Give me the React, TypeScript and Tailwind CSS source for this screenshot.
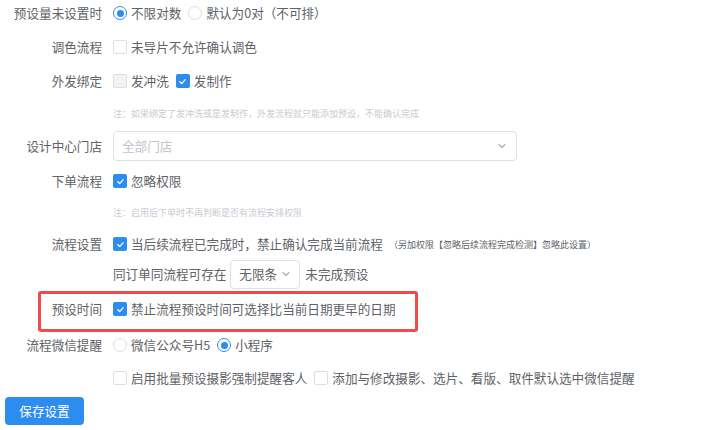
import { ReactNode } from "react";

const font = { fontFamily: '"Noto Sans CJK SC", "Noto Sans", sans-serif' };

function Checkbox({ checked = false, disabled = false }: { checked?: boolean; disabled?: boolean }) {
  if (checked) {
    return (
      <span className="flex h-[14px] w-[14px] shrink-0 items-center justify-center rounded-[2px] bg-[#2d8cf0]">
        <svg width="9" height="9" viewBox="0 0 10 10" fill="none">
          <path d="M2 5.2 4.2 7.3 8 3" stroke="white" strokeWidth="1.4" strokeLinecap="round" strokeLinejoin="round" />
        </svg>
      </span>
    );
  }
  return (
    <span
      className={
        disabled
          ? "h-[14px] w-[14px] shrink-0 rounded-[2px] border border-[#dcdee2] bg-[#f3f3f3]"
          : "h-[14px] w-[14px] shrink-0 rounded-[2px] border border-[#dcdee2] bg-white"
      }
    />
  );
}

function Radio({ checked = false }: { checked?: boolean }) {
  return checked ? (
    <span className="flex h-[14px] w-[14px] shrink-0 items-center justify-center rounded-full border-[1.5px] border-[#2d8cf0] bg-white">
      <span className="h-[7px] w-[7px] rounded-full bg-[#2d8cf0]" />
    </span>
  ) : (
    <span className="h-[14px] w-[14px] shrink-0 rounded-full border border-[#dcdee2] bg-white" />
  );
}

function Option({ control, children, last = false }: { control: ReactNode; children: ReactNode; last?: boolean }) {
  return (
    <span className={last ? "flex items-center" : "mr-[7px] flex items-center"}>
      {control}
      <span className="ml-[4px] whitespace-nowrap">{children}</span>
    </span>
  );
}

function Row({ label, className, children }: { label?: string; className: string; children?: ReactNode }) {
  return (
    <div className={"flex items-center " + className}>
      <div className="w-[102px] shrink-0 whitespace-nowrap text-right">{label}</div>
      <div className="ml-[11px] flex items-center">{children}</div>
    </div>
  );
}

function Chevron() {
  return (
    <svg width="10" height="10" viewBox="0 0 10 10" fill="none">
      <path d="M2 3.5 5 6.5 8 3.5" stroke="#a8abb2" strokeWidth="1.1" strokeLinecap="round" strokeLinejoin="round" />
    </svg>
  );
}

export default function App() {
  return (
    <div className="h-[430px] w-[712px] overflow-hidden bg-white text-[12.6px] leading-none text-[#606266]" style={font}>
      <Row label="预设量未设置时" className="h-[26px]">
        <Option control={<Radio checked />}>不限对数</Option>
        <Option control={<Radio />} last>
          默认为0对（不可排）
        </Option>
      </Row>

      <Row label="调色流程" className="mt-[8px] h-[26px]">
        <Option control={<Checkbox />} last>
          未导片不允许确认调色
        </Option>
      </Row>

      <Row label="外发绑定" className="mt-[8px] h-[26px]">
        <Option control={<Checkbox disabled />}>发冲洗</Option>
        <Option control={<Checkbox checked />} last>
          发制作
        </Option>
      </Row>

      <Row className="mt-[9px] h-[20px]">
        <span className="whitespace-nowrap text-[9px] text-[#c8cbd2]">
          注：如果绑定了发冲洗或是发制作，外发流程就只能添加预设，不能确认完成
        </span>
      </Row>

      <Row label="设计中心门店" className="mt-[8px] h-[30px]">
        <div className="flex h-[30px] w-[404px] items-center justify-between rounded-[4px] border border-[#dcdfe6] pl-[8px] pr-[9px]">
          <span className="text-[#c0c4cc]">全部门店</span>
          <Chevron />
        </div>
      </Row>

      <Row label="下单流程" className="mt-[7px] h-[26px]">
        <Option control={<Checkbox checked />} last>
          忽略权限
        </Option>
      </Row>

      <Row className="mt-[8px] h-[20px]">
        <span className="whitespace-nowrap text-[9px] text-[#c8cbd2]">注：启用后下单时不再判断是否有流程安排权限</span>
      </Row>

      <Row label="流程设置" className="mt-[9px] h-[26px]">
        <Option control={<Checkbox checked />} last>
          当后续流程已完成时，禁止确认完成当前流程
        </Option>
        <span className="ml-[6px] whitespace-nowrap text-[9px] text-[#606266]">
          （另加权限【忽略后续流程完成检测】忽略此设置）
        </span>
      </Row>

      <Row className="mt-[2px] h-[30px]">
        <span className="whitespace-nowrap">同订单同流程可存在</span>
        <div className="ml-[4px] flex h-[29px] w-[70px] items-center justify-between rounded-[4px] border border-[#dcdfe6] pl-[8px] pr-[8px]">
          <span>无限条</span>
          <Chevron />
        </div>
        <span className="ml-[5px] whitespace-nowrap">未完成预设</span>
      </Row>

      <div className="relative mt-[7px]">
        <div className="pointer-events-none absolute left-[38px] top-[-5px] h-[41px] w-[380px] rounded-[3px] border-[3px] border-[#ef4b4b]" />
        <Row label="预设时间" className="h-[26px]">
          <Option control={<Checkbox checked />} last>
            禁止流程预设时间可选择比当前日期更早的日期
          </Option>
        </Row>
      </div>

      <Row label="流程微信提醒" className="mt-[10px] h-[26px]">
        <Option control={<Radio />}>微信公众号H5</Option>
        <Option control={<Radio checked />} last>
          小程序
        </Option>
      </Row>

      <Row className="mt-[7px] h-[26px]">
        <Option control={<Checkbox />}>启用批量预设摄影强制提醒客人</Option>
        <Option control={<Checkbox />} last>
          添加与修改摄影、选片、看版、取件默认选中微信提醒
        </Option>
      </Row>

      <div className="mt-[6px] pl-[5px]">
        <button className="h-[28px] w-[79px] rounded-[4px] bg-[#2d8cf0] text-[12.6px] text-white" style={font}>
          保存设置
        </button>
      </div>
    </div>
  );
}
